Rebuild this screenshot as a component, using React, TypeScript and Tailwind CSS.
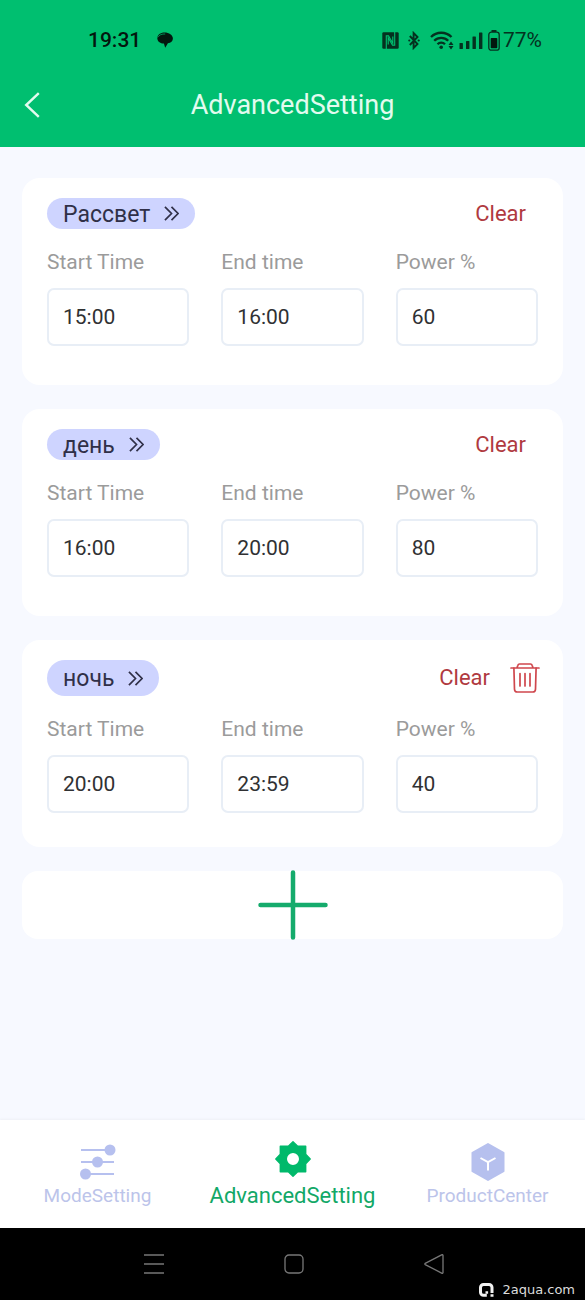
import { useState } from "react";

const FONT = "font-[Roboto,'Noto_Sans',sans-serif]";

interface Slot {
  id: number;
  name: string;
  start: string;
  end: string;
  power: string;
}

const initialSlots: Slot[] = [
  { id: 1, name: "Рассвет", start: "15:00", end: "16:00", power: "60" },
  { id: 2, name: "день", start: "16:00", end: "20:00", power: "80" },
  { id: 3, name: "ночь", start: "20:00", end: "23:59", power: "40" },
];

function StatusBar() {
  return (
    <div className="flex h-[68px] items-end justify-between pr-[43px] pb-4 pl-[88px] text-[#04311f]">
      <div className="flex h-6 items-center gap-4 text-[#03170e]">
        <span className="text-[21px] leading-6 font-medium">19:31</span>
        <svg className="h-4 w-4" viewBox="0 0 16 16" fill="currentColor">
          <path d="M7.500.4C3.500.4.3 2.800.3 6c0 3 2.200 5 5.200 5.400h1.400l1.300 4.400 2.700-4.500c3-.4 5-2.200 5-4.900C15.900 3 12 .4 7.500.4Z" />
          <path d="M.6 5.400C2.200 2.800 5 1.800 8.200 2" fill="none" stroke="#00bf70" strokeWidth="0.7" />
        </svg>
      </div>
      <div className="flex h-6 items-center">
        {/* NFC */}
        <svg className="h-[17px] w-[17px]" viewBox="0 0 17 17">
          <rect x="0.300" y="0.300" width="16.400" height="16.400" rx="1.200" fill="currentColor" />
          <path
            d="M4.300 17V3.800h2.200l4.300 7.500V4.500M12.700 0v13.200h-2.200L6.200 5.700v6.800"
            fill="none"
            stroke="#00bf70"
            strokeWidth="1.100"
          />
        </svg>
        {/* Bluetooth */}
        <svg className="ml-[9px] h-[19px] w-3" viewBox="0 0 12 19" fill="none" stroke="currentColor" strokeWidth="1.900">
          <path d="M1.800 5l7.700 8-3.900 4V2l3.900 4-7.700 8" />
          <circle cx="1.300" cy="9.500" r="1.100" fill="currentColor" stroke="none" />
          <circle cx="10.700" cy="9.500" r="1.100" fill="currentColor" stroke="none" />
        </svg>
        {/* Wi-Fi */}
        <svg className="ml-[10px] h-[19px] w-6" viewBox="0 0 24 19" fill="none" stroke="currentColor" strokeWidth="2.300">
          <path d="M1 6a14.500 14.500 0 0 1 20.500 0M4.200 9.700a9.900 9.900 0 0 1 14 0M7.500 13.200a5.200 5.200 0 0 1 7.500 0" />
          <circle cx="11.200" cy="16.300" r="1.800" fill="currentColor" stroke="none" />
          <path d="M18.500 14l2.500-3.500 2.500 3.500ZM18.500 15l2.500 3.500 2.500-3.500Z" fill="currentColor" stroke="none" />
        </svg>
        {/* signal */}
        <svg className="ml-[5px] h-[17px] w-6" viewBox="0 0 24 17" fill="currentColor">
          <rect x="0.500" y="11" width="3.400" height="6" rx="0.500" />
          <rect x="7" y="9" width="3.400" height="8" rx="0.500" />
          <rect x="13.500" y="4.500" width="3.400" height="12.500" rx="0.500" />
          <rect x="20" y="0.500" width="3.400" height="16.500" rx="0.500" />
        </svg>
        {/* battery */}
        <svg className="ml-[5px] h-[21px] w-3" viewBox="0 0 12 21">
          <rect x="3.500" y="0" width="5" height="2" fill="currentColor" />
          <rect x="0.800" y="2.200" width="10.400" height="18" rx="2.500" fill="none" stroke="currentColor" strokeWidth="1.300" />
          <rect x="2.700" y="8" width="6.600" height="10.300" rx="0.800" fill="#03170e" />
        </svg>
        <span className="ml-[3px] text-[21px] leading-6">77%</span>
      </div>
    </div>
  );
}

function TrashIcon() {
  return (
    <svg className="h-[30px] w-[30px]" viewBox="0 0 30 30" fill="none" stroke="#cf474d" strokeWidth="1.700" strokeLinecap="round" strokeLinejoin="round">
      <path d="M1 5h28M7 4.800l.9-2.600a1.700 1.700 0 0 1 1.600-1.200h11a1.700 1.700 0 0 1 1.600 1.200l.9 2.600" />
      <path d="M3.900 5l.6 21.200a2.900 2.900 0 0 0 2.900 2.800h15.200a2.900 2.900 0 0 0 2.900-2.800L26.100 5" />
      <path d="M10 10.500v12.500M15 10.500v12.500M20 10.500v12.500" />
    </svg>
  );
}

interface FieldProps {
  id: string;
  label: string;
  value: string;
  onChange: (value: string) => void;
}

function Field({ id, label, value, onChange }: FieldProps) {
  return (
    <div className="flex min-w-0 flex-col gap-[14px]">
      <label htmlFor={id} className="text-[21px] leading-6 text-[#9b9b9b]">
        {label}
      </label>
      <input
        id={id}
        type="text"
        value={value}
        onChange={(e) => onChange(e.target.value)}
        className="h-[58px] w-full rounded-[7px] border-2 border-[#e8eef6] bg-white px-[14px] text-[21px] text-[#303133] outline-none"
      />
    </div>
  );
}

interface SlotCardProps {
  slot: Slot;
  last: boolean;
  onChange: (patch: Partial<Slot>) => void;
  onRemove: () => void;
}

function SlotCard({ slot, last, onChange, onRemove }: SlotCardProps) {
  return (
    <section className="min-h-[207px] rounded-[18px] bg-white px-[25px] pt-5 pb-[34px]">
      <div className="mb-[21px] flex items-center justify-between">
        <button
          type="button"
          className={`flex items-center gap-[14px] rounded-full bg-[#ced4ff] px-4 text-[#303048] ${last ? "h-9" : "h-[31px]"}`}
        >
          <span className="pt-0.5 text-[23px] leading-7">{slot.name}</span>
          <svg className="h-[15px] w-[15px]" viewBox="0 0 16 16" fill="none" stroke="currentColor" strokeWidth="1.800">
            <path d="M1 1l7 7-7 7M8 1l7 7-7 7" />
          </svg>
        </button>
        <div className={`flex items-center gap-5 ${last ? "-mr-0.5" : "mr-3"}`}>
          <button
            type="button"
            onClick={() => onChange({ start: "", end: "", power: "" })}
            className="text-[22px] leading-7 text-[#b03a40]"
          >
            Clear
          </button>
          {last && (
            <button type="button" aria-label="Delete" onClick={onRemove}>
              <TrashIcon />
            </button>
          )}
        </div>
      </div>
      <div className="grid grid-cols-3 gap-8">
        <Field id={`start-${slot.id}`} label="Start Time" value={slot.start} onChange={(start) => onChange({ start })} />
        <Field id={`end-${slot.id}`} label="End time" value={slot.end} onChange={(end) => onChange({ end })} />
        <Field id={`power-${slot.id}`} label="Power %" value={slot.power} onChange={(power) => onChange({ power })} />
      </div>
    </section>
  );
}

function SlidersIcon() {
  return (
    <svg className="h-9 w-9" viewBox="0 0 36 36" fill="#b6c0ef" stroke="#b6c0ef" strokeWidth="1.800">
      <path d="M1 6h33M1 18h33M1 30h33" />
      <g stroke="none">
        <circle cx="30" cy="6" r="5.500" />
        <circle cx="17.500" cy="18" r="5.500" />
        <circle cx="5.500" cy="30" r="5.500" />
      </g>
    </svg>
  );
}

function GearIcon() {
  return (
    <svg className="h-9 w-9" viewBox="0 0 36 36" fill="#00b96b">
      <path
        fillRule="evenodd"
        stroke="#00b96b"
        strokeWidth="1.400"
        strokeLinejoin="round"
        d="M18 .8l4.700 4.500h8v8L35.200 18l-4.500 4.700v8h-8L18 35.200l-4.700-4.500h-8v-8L.8 18l4.500-4.700v-8h8ZM18 11.300a6.700 6.700 0 1 0 0 13.400 6.700 6.700 0 0 0 0-13.400Z"
      />
    </svg>
  );
}

function HexIcon() {
  return (
    <svg className="h-[38px] w-[34px]" viewBox="0 0 34 38">
      <path
        d="M17 1l15.500 8.800v18.400L17 37 1.500 28.200V9.800Z"
        fill="#b6c0ee"
        stroke="#b6c0ee"
        strokeWidth="2"
        strokeLinejoin="round"
      />
      <path d="M9.500 15l7.500 4.200L24.500 15M17 19.200v8.300" fill="none" stroke="#fff" strokeWidth="2" />
    </svg>
  );
}

function TabBar() {
  return (
    <nav className="grid h-[108px] grid-cols-3 bg-white shadow-[0_-1px_2px_#eef0f6]">
      <a href="#mode" className="flex flex-col items-center pt-[23px] text-[#bcc4ea]">
        <span className="flex h-[38px] items-center">
          <SlidersIcon />
        </span>
        <span className="mt-[3px] text-[19px] leading-6">ModeSetting</span>
      </a>
      <a href="#advanced" aria-current="page" className="flex flex-col items-center pt-5 text-[#12a867]">
        <span className="flex h-[38px] items-center">
          <GearIcon />
        </span>
        <span className="mt-[6px] text-[22px] leading-6">AdvancedSetting</span>
      </a>
      <a href="#product" className="flex flex-col items-center pt-[23px] text-[#bcc4ea]">
        <HexIcon />
        <span className="mt-[3px] text-[19px] leading-6">ProductCenter</span>
      </a>
    </nav>
  );
}

function SystemBar() {
  return (
    <div className="relative flex h-[72px] items-center justify-center gap-[120px] bg-black pl-0.5 text-[#777]">
      <button type="button" aria-label="Recent apps">
        <svg className="h-5 w-5" viewBox="0 0 20 20" stroke="currentColor" strokeWidth="1.300">
          <path d="M0 1h20M0 10h20M0 19h20" />
        </svg>
      </button>
      <button type="button" aria-label="Home">
        <svg className="h-5 w-5" viewBox="0 0 20 20" fill="none" stroke="currentColor" strokeWidth="1.300">
          <rect x="1" y="1" width="18" height="18" rx="4" />
        </svg>
      </button>
      <button type="button" aria-label="Back">
        <svg className="h-5 w-5" viewBox="0 0 20 20" fill="none" stroke="currentColor" strokeWidth="1.300" strokeLinejoin="round">
          <path d="M19 1.200v17.600a.6.600 0 0 1-.9.500L1.200 10.600a.7.700 0 0 1 0-1.200L18.100.7a.6.600 0 0 1 .9.500Z" />
        </svg>
      </button>
      <div className="absolute right-[10px] bottom-[1px] flex items-center gap-2 text-[#dcdcdc]">
        <svg className="h-4 w-4" viewBox="0 0 16 16" fill="none" stroke="#f2f2f2" strokeWidth="3">
          <path d="M8.800 13.300H5.500a3 3 0 0 1-3-3V5.500a3 3 0 0 1 3-3h5.500a3 3 0 0 1 3 3V11" />
          <path d="M8.800 9.200v2.600M12.500 13.500h3" strokeWidth="2.600" />
        </svg>
        <span className="font-['DejaVu_Sans',sans-serif] text-[13px] leading-[18px]">2aqua.com</span>
      </div>
    </div>
  );
}

export default function App() {
  const [slots, setSlots] = useState(initialSlots);

  const update = (id: number, patch: Partial<Slot>) =>
    setSlots((prev) => prev.map((s) => (s.id === id ? { ...s, ...patch } : s)));

  const remove = (id: number) => setSlots((prev) => prev.filter((s) => s.id !== id));

  const add = () =>
    setSlots((prev) => [...prev, { id: Date.now(), name: "", start: "", end: "", power: "" }]);

  return (
    <div className={`flex min-h-screen flex-col bg-[#f7f9ff] ${FONT}`}>
      <header className="bg-[#00bf70]">
        <StatusBar />
        <div className="grid h-[79px] grid-cols-[1fr_auto_1fr] items-start pt-[21px] text-[#e2fbef]">
          <button type="button" aria-label="Back" className="ml-6 flex h-8 w-8 items-center">
            <svg className="h-[26px] w-4" viewBox="0 0 16 26" fill="none" stroke="currentColor" strokeWidth="2.400">
              <path d="M14.800 1.200L2.200 13l12.600 11.800" />
            </svg>
          </button>
          <h1 className="text-[27px] leading-8">AdvancedSetting</h1>
        </div>
      </header>

      <main className="flex flex-1 flex-col gap-6 px-[22px] pt-[31px] pb-6">
        {slots.map((slot, i) => (
          <SlotCard
            key={slot.id}
            slot={slot}
            last={i === slots.length - 1}
            onChange={(patch) => update(slot.id, patch)}
            onRemove={() => remove(slot.id)}
          />
        ))}
        <button
          type="button"
          aria-label="Add period"
          onClick={add}
          className="flex h-[68px] items-center justify-center rounded-2xl bg-white"
        >
          <svg className="h-[70px] w-[70px]" viewBox="0 0 70 70" stroke="#15ab6c" strokeWidth="4.500" strokeLinecap="round">
            <path d="M35 2.500v65M2.500 35h65" />
          </svg>
        </button>
      </main>

      <TabBar />
      <SystemBar />
    </div>
  );
}
